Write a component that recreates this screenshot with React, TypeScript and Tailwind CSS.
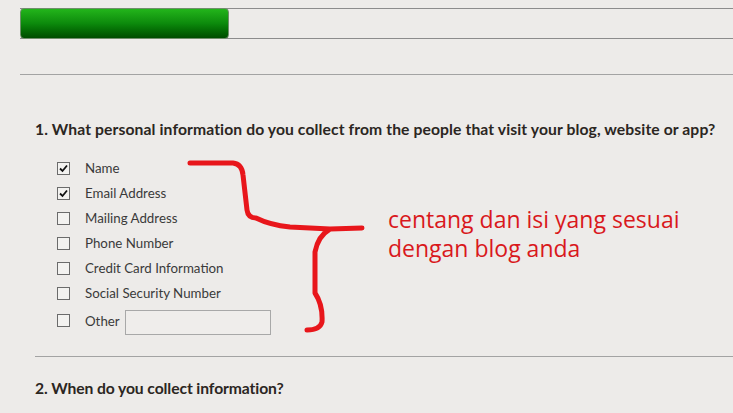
const options = [
  { label: "Name", checked: true },
  { label: "Email Address", checked: true },
  { label: "Mailing Address", checked: false },
  { label: "Phone Number", checked: false },
  { label: "Credit Card Information", checked: false },
  { label: "Social Security Number", checked: false },
];

function Box({ checked }: { checked: boolean }) {
  return (
    <span className="flex h-[13px] w-[13px] shrink-0 items-center justify-center border border-[#6b6b6b] bg-[#f3f2f0]">
      {checked && (
        <svg width="11" height="11" viewBox="0 0 11 11">
          <path d="M2 5.5 L4.5 8 L9 2.5" fill="none" stroke="#111" strokeWidth="1.8" />
        </svg>
      )}
    </span>
  );
}

export default function App() {
  return (
    <div className="relative h-[413px] w-[733px] overflow-hidden bg-[#edebe9] font-['Lato',sans-serif] text-[#333]">
      {/* progress */}
      <div className="ml-[20px] mt-[8px] flex h-[31px] border-y border-[#8c8c8c]">
        <div className="-my-px h-[31px] w-[209px] rounded-[4px] border border-[#6f8f6a] bg-gradient-to-b from-[#23b51b] via-[#0c8a0c] to-[#004d00]" />
      </div>
      <div className="ml-[20px] mt-[35px] border-t border-[#a3a3a3]" />

      <div className="ml-[35px] pt-[43px]">
        <h2 className="text-[15.7px] font-bold tracking-[0.1px] text-[#2b2622]">
          1. What personal information do you collect from the people that visit your blog, website or app?
        </h2>
        <div className="ml-[22px] mt-[19px] flex flex-col gap-[9px] text-[13.3px] text-[#3a3a3a]">
          {options.map((o) => (
            <div key={o.label} className="flex h-[16px] items-center gap-[15px]">
              <Box checked={o.checked} />
              <span>{o.label}</span>
            </div>
          ))}
          <div className="-mt-[1px] flex items-center gap-[15px]">
            <span className="-mt-[4px]"><Box checked={false} /></span>
            <span>Other</span>
            <span className="-ml-[10px] h-[25px] w-[146px] border border-[#a8a8a8] bg-[#efedeb]" />
          </div>
        </div>
        <div className="mt-[21px] border-t border-[#a3a3a3]" />
        <h2 className="mt-[20px] text-[15.7px] font-bold tracking-[-0.1px] text-[#2b2622]">
          2. When do you collect information?
        </h2>
      </div>

      {/* annotation */}
      <svg className="absolute left-0 top-0" width="733" height="413" viewBox="0 0 733 413">
        <path
          d="M190 163 L233 163 Q242 164 243 175 L247 210 Q248 218 256 218 Q270 225 290 227 L330 229 L362 228 M330 229 Q318 236 315 252 L315 293 Q323 305 322 322 Q320 330 307 330"
          fill="none"
          stroke="#e8161b"
          strokeWidth="5"
          strokeLinecap="round"
          strokeLinejoin="round"
        />
      </svg>
      <div className="absolute left-[388px] top-[205px] font-['Open_Sans',sans-serif] text-[23px] leading-[29px] text-[#d9181c]">
        <div>centang dan isi yang sesuai</div>
        <div>dengan blog anda</div>
      </div>
    </div>
  );
}
